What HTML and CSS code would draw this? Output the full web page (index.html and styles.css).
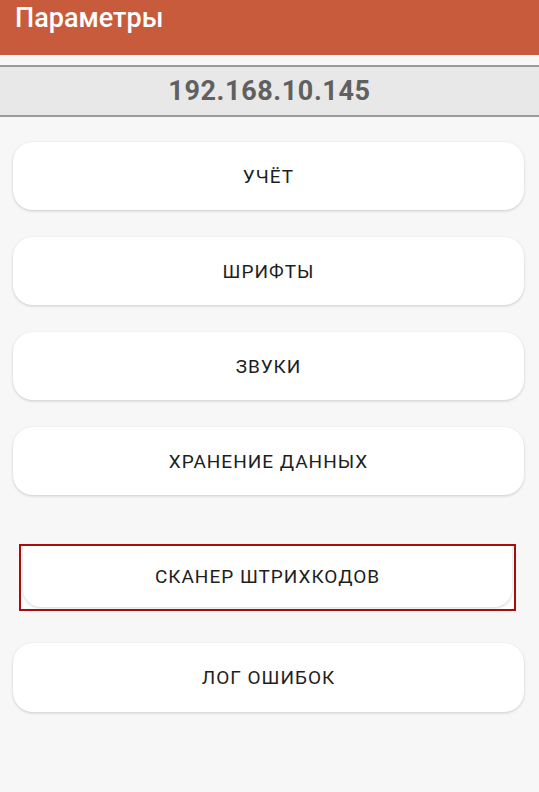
FILE: index.html
```html
<!DOCTYPE html>
<html lang="ru">
<head>
<meta charset="utf-8">
<title>Параметры</title>
<link rel="stylesheet" href="styles.css">
</head>
<body>
<header class="appbar"><h1 class="title">Параметры</h1></header>
<div class="ipbar">192.168.10.145</div>
<main class="menu">
  <div class="btn">УЧЁТ</div>
  <div class="btn">ШРИФТЫ</div>
  <div class="btn">ЗВУКИ</div>
  <div class="btn">ХРАНЕНИЕ ДАННЫХ</div>
  <div class="highlight"><div class="btn inner">СКАНЕР ШТРИХКОДОВ</div></div>
  <div class="btn last">ЛОГ ОШИБОК</div>
</main>
</body>
</html>
```
FILE: styles.css
```css
html, body { margin: 0; padding: 0; }
body {
  width: 539px;
  height: 792px;
  background: #f7f7f7;
  font-family: Roboto, "Noto Sans", sans-serif;
  overflow: hidden;
}
.appbar {
  height: 55px;
  background: #c75b3b;
  display: flex;
  align-items: flex-start;
  padding-left: 15px;
  box-sizing: border-box;
}
.title {
  margin: 0;
  color: #fff;
  font-size: 27px;
  font-weight: 500;
  line-height: 36px;
}
.ipbar {
  margin-top: 10px;
  height: 48px;
  border-top: 2px solid #9a9a9a;
  border-bottom: 2px solid #9a9a9a;
  background: #e8e8e8;
  color: #606060;
  font-size: 27px;
  font-weight: 700;
  display: flex;
  align-items: center;
  justify-content: center;
  letter-spacing: 0.6px;
}
.menu {
  display: flex;
  flex-direction: column;
  padding: 25px 15px 0 13px;
  gap: 27px;
}
.btn {
  height: 68px;
  background: #fff;
  border-radius: 20px;
  box-shadow: 0 1px 3px rgba(0,0,0,0.18);
  display: flex;
  align-items: center;
  justify-content: center;
  color: #1e1e1e;
  font-size: 19px;
  letter-spacing: 1px;
}
.highlight {
  margin: 22px 8px 5px 6px;
  height: 63px;
  border: 2px solid #a80d0d;
  overflow: hidden;
  background: #fff;
}
.inner {
  height: 61px;
  margin: -12px 2px 0 2px;
  padding-top: 12px;
  border-radius: 0 0 18px 18px;
}
.last { height: 69px; }
```
